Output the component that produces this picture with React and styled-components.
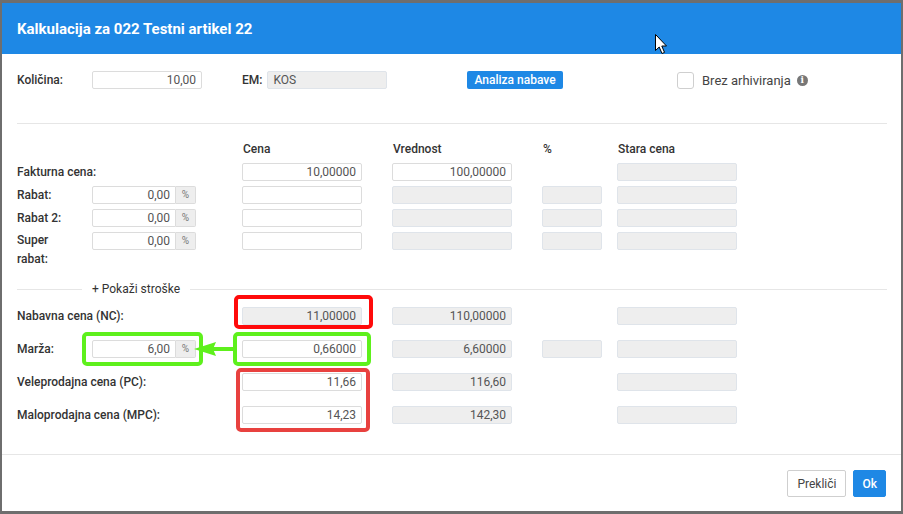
import React from "react";
import styled, { createGlobalStyle } from "styled-components";

const Global = createGlobalStyle`
  html, body { margin: 0; padding: 0; }
  body {
    background: #6e6e6e;
    font-family: Roboto, "Liberation Sans", Arial, sans-serif;
    font-size: 12px;
    color: #333;
  }
  * { box-sizing: border-box; }
`;

const Page = styled.div`
  padding: 3px 2px 3px 2px;
  width: 903px;
  height: 514px;
`;

const Dialog = styled.div`
  width: 899px;
  height: 508px;
  background: #fff;
  display: flex;
  flex-direction: column;
  overflow: hidden;
`;

const Header = styled.div`
  position: relative;
  flex: 0 0 51px;
  height: 51px;
  background: #1e88e5;
  display: flex;
  align-items: center;
  padding-left: 15px;
`;

const Title = styled.h1`
  margin: 0;
  color: #fff;
  font-size: 15px;
  font-weight: 700;
`;

const Cursor = styled.svg`
  position: absolute;
  left: 652px;
  top: 30px;
`;

const Body = styled.div`
  flex: 1 1 auto;
  min-height: 0;
  padding: 16px 14px 0 15px;
`;

const TopRow = styled.div`
  display: grid;
  grid-template-columns: 75px 150px 225px 210px 1fr;
  align-items: center;
  height: 18px;
`;

const Label = styled.div`
  font-weight: 500;
  color: #333;
  line-height: 18px;
  white-space: nowrap;
  grid-column: ${(p) => p.$span || "auto"};
`;

const Inline = styled.div`
  display: flex;
  align-items: center;
  gap: ${(p) => p.$gap || 0}px;
`;

const Input = styled.div`
  width: ${(p) => p.$w || 120}px;
  height: 18px;
  border: 1px solid ${(p) => (p.$disabled ? "#dfe4ea" : "#dcdcdc")};
  background: ${(p) => (p.$disabled ? "#eeeeee" : "#fff")};
  border-radius: ${(p) => (p.$addon ? "2px 0 0 2px" : "2px")};
  color: #555;
  font-size: 12px;
  line-height: 16px;
  padding: 0 5px;
  text-align: ${(p) => (p.$left ? "left" : "right")};
  white-space: nowrap;
  overflow: hidden;
`;

const Addon = styled.div`
  width: 20px;
  height: 18px;
  border: 1px solid #dcdcdc;
  border-left: none;
  background: #eeeeee;
  border-radius: 0 2px 2px 0;
  color: #777;
  font-size: 10px;
  line-height: 16px;
  text-align: center;
`;

const PrimaryButton = styled.button`
  width: 96px;
  height: 18px;
  padding: 0;
  border: none;
  border-radius: 2px;
  background: #1e88e5;
  color: #fff;
  font-family: inherit;
  font-size: 12px;
  font-weight: 500;
  line-height: 18px;
`;

const CheckRow = styled.label`
  display: flex;
  align-items: center;
  gap: 8px;
  font-size: 13px;
  color: #444;
  padding-top: 2px;
`;

const CheckBox = styled.span`
  width: 17px;
  height: 17px;
  border: 1px solid #cfcfcf;
  border-radius: 3px;
  background: #fff;
`;

const InfoIcon = styled.span`
  width: 11px;
  height: 11px;
  border-radius: 50%;
  background: #777;
  color: #fff;
  font-size: 9px;
  font-weight: 700;
  line-height: 11px;
  text-align: center;
  margin-left: -2px;
  font-family: "DejaVu Serif", serif;
`;

const Rule = styled.div`
  height: 1px;
  background: #e6e6e6;
  margin-top: ${(p) => p.$mt || 0}px;
`;

const Table = styled.div`
  display: grid;
  grid-template-columns: 75px 150px 150px 150px 75px 120px;
  grid-auto-rows: 18px;
  row-gap: ${(p) => p.$gap}px;
  margin-top: ${(p) => p.$mt || 0}px;
  align-items: center;
`;

const ColHead = styled.div`
  font-weight: 500;
  color: #333;
  padding-left: 1px;
  grid-column: ${(p) => p.$col};
`;

const Cell = styled.div`
  grid-column: ${(p) => p.$col};
  position: relative;
  display: flex;
  height: 18px;
`;

const TallLabel = styled.div`
  font-weight: 500;
  color: #333;
  line-height: 19px;
  align-self: start;
  margin-top: -1px;
  grid-column: 1;
  height: 18px;
  white-space: nowrap;
`;

const Separator = styled.div`
  display: flex;
  align-items: center;
  margin-top: 32px;
  height: 14px;
`;

const SepLine = styled.div`
  height: 1px;
  background: #e6e6e6;
  ${(p) => (p.$fixed ? `width: ${p.$fixed}px;` : "flex: 1;")}
`;

const SepText = styled.div`
  padding: 0 10px;
  color: #333;
  font-size: 12px;
`;

const MarkBox = styled.div`
  position: absolute;
  left: ${(p) => p.$l}px;
  right: ${(p) => p.$r}px;
  top: ${(p) => p.$t}px;
  bottom: ${(p) => p.$b}px;
  border: 4px solid ${(p) => p.$c};
  border-radius: 5px;
  pointer-events: none;
`;

const Arrow = styled.svg`
  position: absolute;
  left: 102px;
  top: -1px;
`;

const Footer = styled.div`
  flex: 0 0 57px;
  border-top: 1px solid #e6e6e6;
  height: 57px;
  padding: 15px 15px 0;
  display: flex;
  justify-content: flex-end;
  align-items: flex-start;
  gap: 7px;
`;

const FooterButton = styled.button`
  height: 27px;
  padding: 0 ${(p) => (p.$primary ? 8 : 9)}px;
  border: 1px solid ${(p) => (p.$primary ? "#1e88e5" : "#cfcfcf")};
  background: ${(p) => (p.$primary ? "#1e88e5" : "#fff")};
  color: ${(p) => (p.$primary ? "#fff" : "#444")};
  border-radius: 2px;
  font-family: inherit;
  font-size: 12px;
  font-weight: ${(p) => (p.$primary ? 500 : 400)};
`;

const GREEN = "#5ef01c";

const Pct = ({ value }) => (
  <Inline>
    <Input $w={84} $addon>{value}</Input>
    <Addon>%</Addon>
  </Inline>
);

export default function App() {
  return (
    <>
      <Global />
      <Page>
        <Dialog>
          <Header>
            <Title>Kalkulacija za 022 Testni artikel 22</Title>
            <Cursor width="14" height="22" viewBox="0 0 14 22">
              <path
                d="M1.5 1.5 L1.5 17.5 L5.2 14 L8 20.5 L10.5 19.4 L7.8 13 L12.5 13 Z"
                fill="#fff"
                stroke="#000"
                strokeWidth="1"
                strokeLinejoin="round"
              />
            </Cursor>
          </Header>
          <Body>
            <TopRow>
              <Label>Količina:</Label>
              <Cell>
                <Input $w={110}>10,00</Input>
              </Cell>
              <Inline $gap={5}>
                <Label>EM:</Label>
                <Input $w={120} $disabled $left>KOS</Input>
              </Inline>
              <Cell>
                <PrimaryButton>Analiza nabave</PrimaryButton>
              </Cell>
              <CheckRow>
                <CheckBox />
                <span>Brez arhiviranja</span>
                <InfoIcon>i</InfoIcon>
              </CheckRow>
            </TopRow>

            <Rule $mt={35} />

            <Table $gap={5} $mt={16}>
              <ColHead $col={3}>Cena</ColHead>
              <ColHead $col={4}>Vrednost</ColHead>
              <ColHead $col={5}>%</ColHead>
              <ColHead $col={6}>Stara cena</ColHead>

              <Label $span="1 / 3">Fakturna cena:</Label>
              <Cell $col={3}><Input>10,00000</Input></Cell>
              <Cell $col={4}><Input>100,00000</Input></Cell>
              <Cell $col={6}><Input $disabled /></Cell>

              <Label>Rabat:</Label>
              <Cell $col={2}><Pct value="0,00" /></Cell>
              <Cell $col={3}><Input /></Cell>
              <Cell $col={4}><Input $disabled /></Cell>
              <Cell $col={5}><Input $disabled $w={60} /></Cell>
              <Cell $col={6}><Input $disabled /></Cell>

              <Label>Rabat 2:</Label>
              <Cell $col={2}><Pct value="0,00" /></Cell>
              <Cell $col={3}><Input /></Cell>
              <Cell $col={4}><Input $disabled /></Cell>
              <Cell $col={5}><Input $disabled $w={60} /></Cell>
              <Cell $col={6}><Input $disabled /></Cell>

              <TallLabel>Super<br />rabat:</TallLabel>
              <Cell $col={2}><Pct value="0,00" /></Cell>
              <Cell $col={3}><Input /></Cell>
              <Cell $col={4}><Input $disabled /></Cell>
              <Cell $col={5}><Input $disabled $w={60} /></Cell>
              <Cell $col={6}><Input $disabled /></Cell>
            </Table>

            <Separator>
              <SepLine $fixed={65} />
              <SepText>+ Pokaži stroške</SepText>
              <SepLine />
            </Separator>

            <Table $gap={15} $mt={11}>
              <Label $span="1 / 3">Nabavna cena (NC):</Label>
              <Cell $col={3}>
                <Input $disabled>11,00000</Input>
                <MarkBox $c="#ff0a0a" $l={-8} $r={19} $t={-12} $b={-4} />
              </Cell>
              <Cell $col={4}><Input $disabled>110,00000</Input></Cell>
              <Cell $col={6}><Input $disabled /></Cell>

              <Label>Marža:</Label>
              <Cell $col={2}>
                <Pct value="6,00" />
                <MarkBox $c={GREEN} $l={-10} $r={39} $t={-8} $b={-8} />
                <Arrow width="42" height="20" viewBox="0 0 42 20">
                  <polygon points="0,10 22,3 19,10 22,17" fill={GREEN} />
                  <rect x="18" y="8" width="24" height="4" fill={GREEN} />
                </Arrow>
              </Cell>
              <Cell $col={3}>
                <Input>0,66000</Input>
                <MarkBox $c={GREEN} $l={-9} $r={21} $t={-8} $b={-8} />
              </Cell>
              <Cell $col={4}><Input $disabled>6,60000</Input></Cell>
              <Cell $col={5}><Input $disabled $w={60} /></Cell>
              <Cell $col={6}><Input $disabled /></Cell>

              <Label $span="1 / 3">Veleprodajna cena (PC):</Label>
              <Cell $col={3}>
                <Input>11,66</Input>
                <MarkBox $c="#e8413f" $l={-6} $r={22} $t={-5} $b={-41} />
              </Cell>
              <Cell $col={4}><Input $disabled>116,60</Input></Cell>
              <Cell $col={6}><Input $disabled /></Cell>

              <Label $span="1 / 3">Maloprodajna cena (MPC):</Label>
              <Cell $col={3}><Input>14,23</Input></Cell>
              <Cell $col={4}><Input $disabled>142,30</Input></Cell>
              <Cell $col={6}><Input $disabled /></Cell>
            </Table>
          </Body>
          <Footer>
            <FooterButton>Prekliči</FooterButton>
            <FooterButton $primary>Ok</FooterButton>
          </Footer>
        </Dialog>
      </Page>
    </>
  );
}
